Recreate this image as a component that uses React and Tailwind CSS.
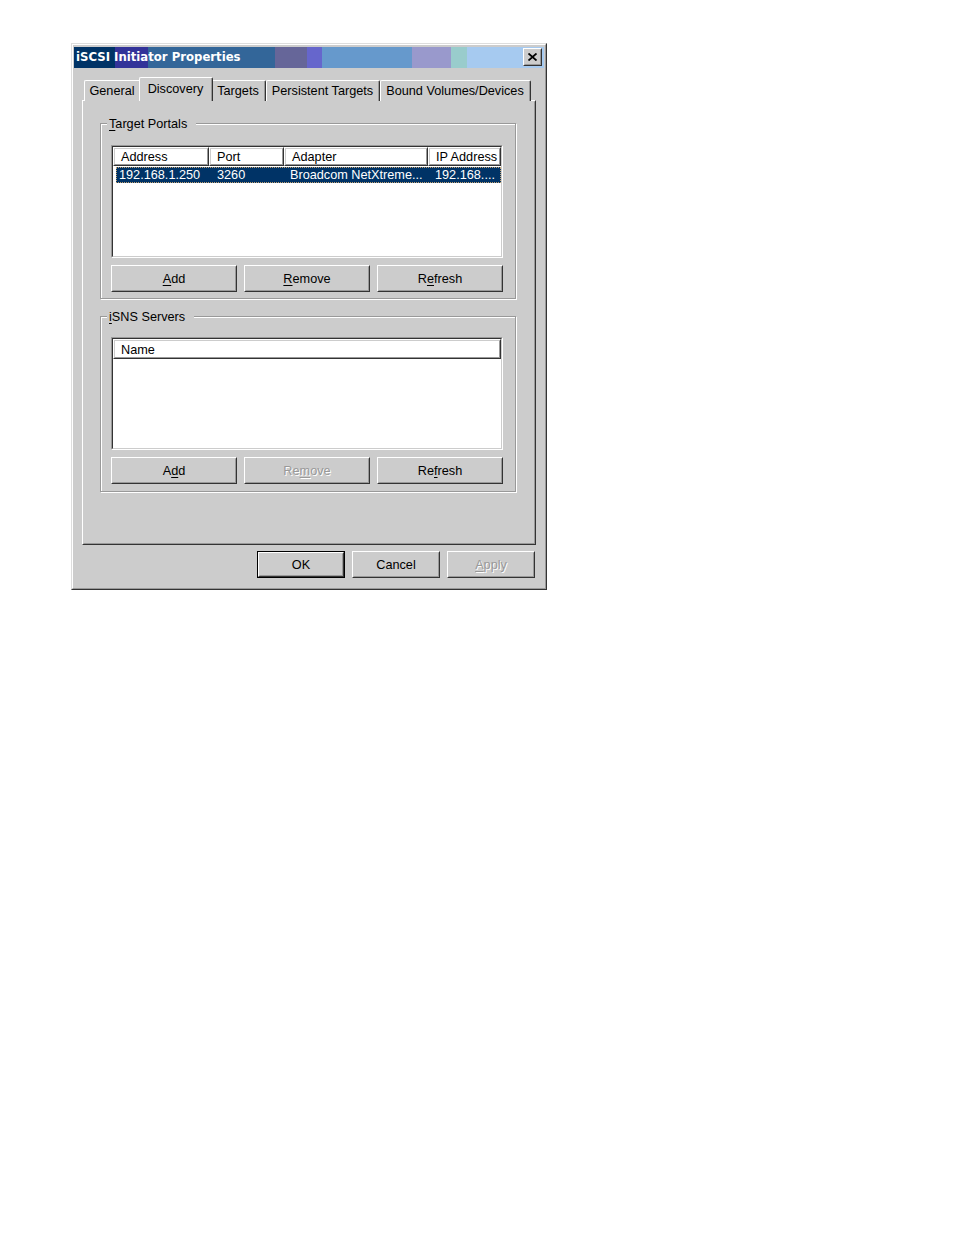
import React from "react";

const FONT = { fontFamily: '"Liberation Sans", Arial, sans-serif' };

function U({ children }) {
  return <span className="underline underline-offset-[2px] decoration-[1px]">{children}</span>;
}

function Btn({ children, disabled, def, w = "w-[126px]", h = "h-[27px]" }) {
  const inner = (
    <div className="h-full w-full border border-t-white border-l-white border-b-[#333333] border-r-[#333333]">
      <div className="h-full w-full border border-t-[#cccccc] border-l-[#cccccc] border-b-[#999999] border-r-[#999999] flex items-center justify-center pt-[2px]">
        <span
          className={
            disabled
              ? "text-[#999999] [text-shadow:1px_1px_0_#ffffff]"
              : "text-black"
          }
        >
          {children}
        </span>
      </div>
    </div>
  );
  return (
    <div className={`${w} ${h} shrink-0 ${def ? "border border-black" : ""}`}>{inner}</div>
  );
}

function HeaderCell({ children, w }) {
  return (
    <div className={`${w} h-full shrink-0 border border-t-white border-l-white border-b-[#333333] border-r-[#333333]`}>
      <div className="h-full w-full border border-t-[#cccccc] border-l-[#cccccc] border-b-[#999999] border-r-[#999999] flex items-center pl-[6px] pt-[2px] leading-none">
        {children}
      </div>
    </div>
  );
}

function Sunken({ className, children }) {
  return (
    <div className={`${className} border border-t-[#999999] border-l-[#999999] border-b-white border-r-white`}>
      <div className="h-full w-full border border-t-[#333333] border-l-[#333333] border-b-[#cccccc] border-r-[#cccccc] bg-white overflow-hidden">
        {children}
      </div>
    </div>
  );
}

function Group({ label, className, children }) {
  return (
    <div className={`relative ${className} border border-[#999999] shadow-[inset_1px_1px_0_#ffffff,1px_1px_0_#ffffff]`}>
      <div className="absolute left-[6px] top-[-7px] bg-[#cccccc] pl-[2px] pr-[9px] leading-[15px]">{label}</div>
      {children}
    </div>
  );
}

function Tab({ children, w, active }) {
  if (active) {
    return (
      <div className={`${w} h-[24px] -mx-[2px] relative z-10 bg-[#cccccc] border-l border-t border-l-white border-t-white border-r border-r-[#333333] rounded-t-[2px] flex`}>
        <div className="flex-1 border-r border-r-[#999999] flex items-start justify-center pt-[2px]">{children}</div>
      </div>
    );
  }
  return (
    <div className={`${w} h-[21px] mt-[3px] bg-[#cccccc] border-l border-t border-l-white border-t-white border-r border-r-[#333333] rounded-t-[2px] flex`}>
      <div className="flex-1 border-r border-r-[#999999] flex items-start justify-center pt-[1px]">{children}</div>
    </div>
  );
}

export default function App() {
  return (
    <div className="w-full h-[1235px] bg-white text-[12.7px] text-black" style={FONT}>
      <div className="pt-[43px] pl-[71px]">
        {/* dialog */}
        <div className="w-[476px] h-[547px] border border-t-[#dddddd] border-l-[#dddddd] border-b-[#333333] border-r-[#333333]">
          <div className="h-full w-full border border-t-white border-l-white border-b-[#999999] border-r-[#999999] bg-[#cccccc] p-[1px] flex flex-col">
            {/* title bar */}
            <div className="relative h-[21px] mt-[1px] flex shrink-0">
              <div className="w-[41px] bg-[#003366]" />
              <div className="w-[33px] bg-[#333399]" />
              <div className="w-[127px] bg-[#336699]" />
              <div className="w-[32px] bg-[#666699]" />
              <div className="w-[15px] bg-[#6666cc]" />
              <div className="w-[90px] bg-[#6699cc]" />
              <div className="w-[39px] bg-[#9999cc]" />
              <div className="w-[16px] bg-[#99cccc]" />
              <div className="flex-1 bg-[#a6caf0]" />
              <div
                className="absolute left-[2px] top-0 h-full flex items-center pt-[1px] text-white font-bold text-[11.7px]"
                style={{ fontFamily: '"DejaVu Sans", Verdana, sans-serif' }}
              >
                iSCSI Initiator Properties
              </div>
              <div className="absolute right-[2px] top-[1px] w-[19px] h-[18px] border border-t-white border-l-white border-b-[#333333] border-r-[#333333]">
                <div className="h-full w-full bg-[#cccccc] border border-t-[#cccccc] border-l-[#cccccc] border-b-[#999999] border-r-[#999999] flex items-center justify-center">
                  <svg width="9" height="8" viewBox="0 0 9 8">
                    <path d="M0.5 0.5 L8.5 7.5 M8.5 0.5 L0.5 7.5" stroke="#000" strokeWidth="1.8" />
                  </svg>
                </div>
              </div>
            </div>

            {/* tabs */}
            <div className="mt-[9px] ml-[10px] flex items-start h-[24px] relative z-10">
              <Tab w="w-[57px]">General</Tab>
              <Tab w="w-[74px]" active>Discovery</Tab>
              <Tab w="w-[55px]">Targets</Tab>
              <Tab w="w-[114px]">Persistent Targets</Tab>
              <Tab w="w-[151px]">Bound Volumes/Devices</Tab>
            </div>

            {/* panel */}
            <div className="ml-[8px] -mt-[1px] w-[454px] h-[445px] border border-t-white border-l-white border-b-[#333333] border-r-[#333333]">
              <div className="h-full w-full border border-t-[#cccccc] border-l-[#cccccc] border-b-[#999999] border-r-[#999999] pt-[21px] pl-[16px]">
                <Group label={<span><U>T</U>arget Portals</span>} className="w-[416px] h-[176px]">
                  <div className="pt-[21px] pl-[10px]">
                    <Sunken className="w-[392px] h-[113px]">
                      <div className="flex h-[19px] w-full">
                        <HeaderCell w="w-[96px]">Address</HeaderCell>
                        <HeaderCell w="w-[75px]">Port</HeaderCell>
                        <HeaderCell w="w-[144px]">Adapter</HeaderCell>
                        <HeaderCell w="w-[73px]">IP Address</HeaderCell>
                      </div>
                      <div className="mt-[1px] ml-[3px] w-[385px] h-[16px] bg-[#003366] text-white border border-dotted border-[#c0a070] flex items-center pt-[1px] leading-none">
                        <div className="w-[92px] pl-[2px] shrink-0">192.168.1.250</div>
                        <div className="w-[74px] pl-[8px] shrink-0">3260</div>
                        <div className="w-[144px] pl-[7px] shrink-0 whitespace-nowrap">Broadcom NetXtreme...</div>
                        <div className="pl-[8px] whitespace-nowrap">192.168....</div>
                      </div>
                    </Sunken>
                    <div className="mt-[7px] flex gap-[7px]">
                      <Btn><U>A</U>dd</Btn>
                      <Btn><U>R</U>emove</Btn>
                      <Btn>R<U>e</U>fresh</Btn>
                    </div>
                  </div>
                </Group>

                <Group label={<span><U>i</U>SNS Servers</span>} className="mt-[17px] w-[416px] h-[176px]">
                  <div className="pt-[20px] pl-[10px]">
                    <Sunken className="w-[392px] h-[113px]">
                      <div className="flex h-[20px] w-full">
                        <HeaderCell w="w-[388px]">Name</HeaderCell>
                      </div>
                    </Sunken>
                    <div className="mt-[7px] flex gap-[7px]">
                      <Btn>A<U>d</U>d</Btn>
                      <Btn disabled>Re<U>m</U>ove</Btn>
                      <Btn>Re<U>f</U>resh</Btn>
                    </div>
                  </div>
                </Group>
              </div>
            </div>

            {/* bottom buttons */}
            <div className="mt-[6px] ml-[183px] flex gap-[7px]">
              <Btn def w="w-[88px]" h="h-[27px]">OK</Btn>
              <Btn w="w-[88px]" h="h-[27px]">Cancel</Btn>
              <Btn disabled w="w-[88px]" h="h-[27px]"><U>A</U>pply</Btn>
            </div>
          </div>
        </div>
      </div>
    </div>
  );
}
